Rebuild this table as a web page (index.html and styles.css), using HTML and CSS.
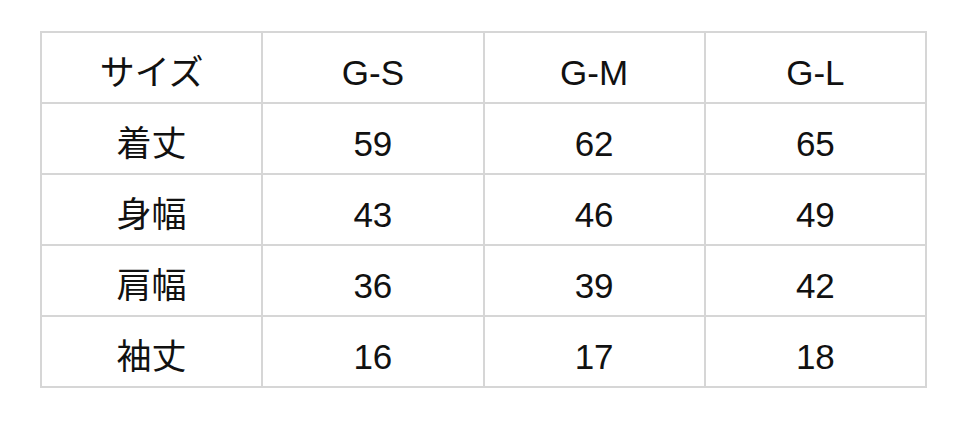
FILE: index.html
```html
<!DOCTYPE html>
<html lang="ja">
<head>
<meta charset="utf-8">
<link rel="stylesheet" href="styles.css">
</head>
<body>
<table class="size-table">
  <tr><td>サイズ</td><td>G-S</td><td>G-M</td><td>G-L</td></tr>
  <tr><td>着丈</td><td>59</td><td>62</td><td>65</td></tr>
  <tr><td>身幅</td><td>43</td><td>46</td><td>49</td></tr>
  <tr><td>肩幅</td><td>36</td><td>39</td><td>42</td></tr>
  <tr><td>袖丈</td><td>16</td><td>17</td><td>18</td></tr>
</table>
</body>
</html>
```

FILE: styles.css
```css
html, body {
  margin: 0;
  background: #ffffff;
}
body {
  padding: 31px 0 0 40px;
}
.size-table {
  border-collapse: collapse;
  width: 887px;
  table-layout: fixed;
  font-family: "Liberation Sans", "Noto Sans CJK JP", Arial, sans-serif;
  font-size: 35px;
  color: #111111;
}
.size-table td {
  border: 2px solid #d6d6d6;
  height: 60px;
  padding: 9px 0 0 0;
  text-align: center;
  vertical-align: middle;
  line-height: 1;
}
```
